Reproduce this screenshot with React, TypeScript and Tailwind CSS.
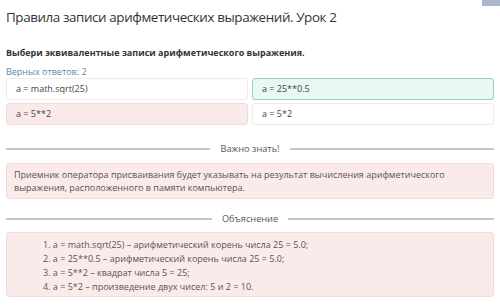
import React from 'react';

const options = [
  { text: 'a = math.sqrt(25)', tone: 'plain' },
  { text: 'a = 25**0.5', tone: 'green' },
  { text: 'a = 5**2', tone: 'red' },
  { text: 'a = 5*2', tone: 'plain' },
];

const toneClass: Record<string, string> = {
  plain: 'bg-white border-[#ececec]',
  green: 'bg-[#e9f8f4] border-[#8fd3c3]',
  red: 'bg-[#fbeaea] border-[#f3dada]',
};

const Divider: React.FC<{ label: string }> = ({ label }) => (
  <div className="flex items-center gap-[10px] h-[12px]">
    <div className="flex-1 h-[2px] bg-[#c4c4c4]" />
    <span className="text-[9.2px] leading-[12px] text-[#555]">{label}</span>
    <div className="flex-1 h-[2px] bg-[#c4c4c4]" />
  </div>
);

const App: React.FC = () => {
  return (
    <div
      className="relative w-[500px] h-[308px] bg-white overflow-hidden px-[6px]"
      style={{ fontFamily: '"Open Sans", "Noto Sans", sans-serif' }}
    >
      <div className="absolute right-0 top-0 w-[18px] h-[6px] bg-[#a9b9c9]" />

      <h1 className="pt-[6px] text-[13.4px] leading-[22px] text-[#333] tracking-[-0.4px]">
        Правила записи арифметических выражений. Урок 2
      </h1>

      <p className="mt-[18px] text-[9px] leading-[14px] font-bold text-[#333]">
        Выбери эквивалентные записи арифметического выражения.
      </p>

      <p className="mt-[6px] text-[9px] leading-[12px] text-[#5a86ad]">Верных ответов: 2</p>

      <div className="grid grid-cols-2 gap-x-[4px] gap-y-[3px]">
        {options.map((o) => (
          <div
            key={o.text}
            className={`h-[22px] flex items-center px-[9px] rounded-[3px] border text-[9px] text-[#444] ${toneClass[o.tone]}`}
          >
            {o.text}
          </div>
        ))}
      </div>

      <div className="mt-[18px]">
        <Divider label="Важно знать!" />
      </div>

      <div className="mt-[8px] rounded-[3px] border border-[#f3dada] bg-[#fbeaea] px-[7px] pt-[4px] pb-[4px] text-[9px] leading-[13px] text-[#555]">
        Приемник оператора присваивания будет указывать на результат вычисления арифметического
        выражения, расположенного в памяти компьютера.
      </div>

      <div className="mt-[14px]">
        <Divider label="Объяснение" />
      </div>

      <div className="mt-[7px] rounded-[3px] border border-[#f3dada] bg-[#fbeaea] pl-[36px] pt-[5px] pb-[2px] text-[9px] leading-[14px] text-[#555]">
        <ol className="list-none">
          <li>1. a = math.sqrt(25) – арифметический корень числа 25 = 5.0;</li>
          <li>2. a = 25**0.5 – арифметический корень числа 25 = 5.0;</li>
          <li>3. a = 5**2 – квадрат числа 5 = 25;</li>
          <li>4. a = 5*2 – произведение двух чисел: 5 и 2 = 10.</li>
        </ol>
      </div>
    </div>
  );
};

export default App;
